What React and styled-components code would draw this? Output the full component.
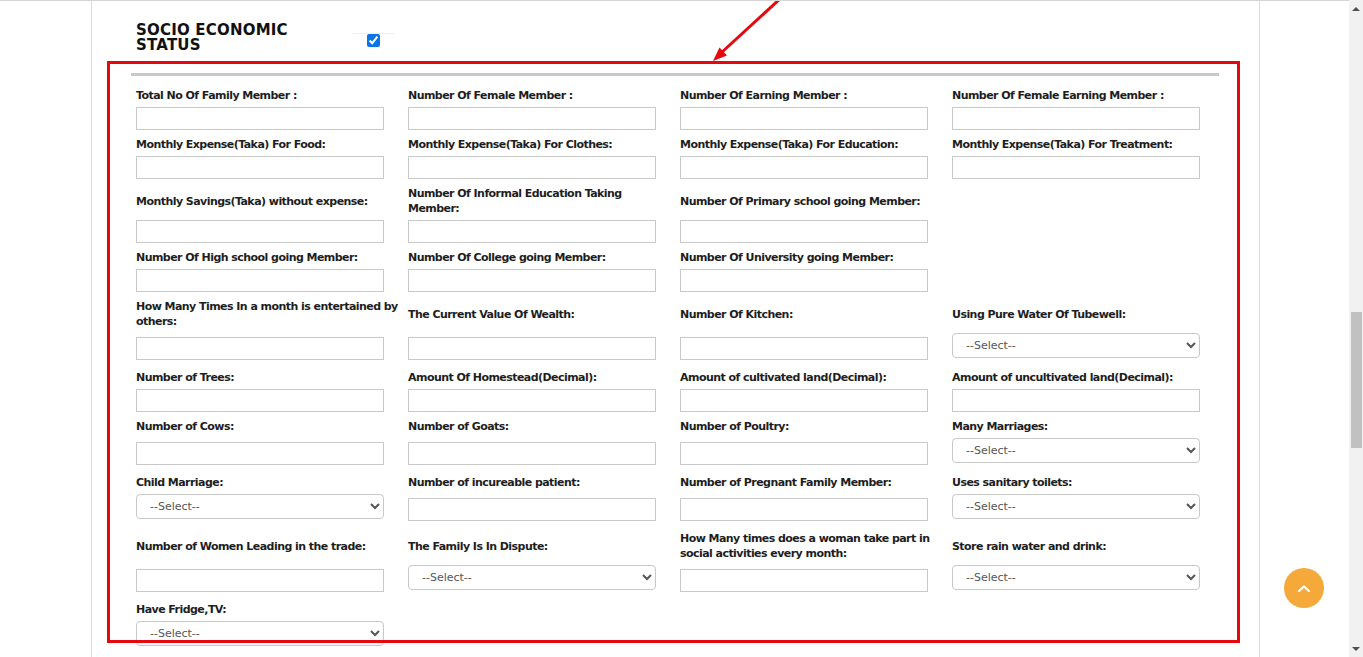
import React from "react";
import styled, { createGlobalStyle } from "styled-components";

const labelWidths = [266, 224, 252, 252];

const rows = [
  [
    { label: "Total No Of Family Member :" },
    { label: "Number Of Female Member :" },
    { label: "Number Of Earning Member :" },
    { label: "Number Of Female Earning Member :" },
  ],
  [
    { label: "Monthly Expense(Taka) For Food:" },
    { label: "Monthly Expense(Taka) For Clothes:" },
    { label: "Monthly Expense(Taka) For Education:" },
    { label: "Monthly Expense(Taka) For Treatment:" },
  ],
  [
    { label: "Monthly Savings(Taka) without expense:" },
    { label: "Number Of Informal Education Taking Member:" },
    { label: "Number Of Primary school going Member:" },
    null,
  ],
  [
    { label: "Number Of High school going Member:" },
    { label: "Number Of College going Member:" },
    { label: "Number Of University going Member:" },
    null,
  ],
  [
    { label: "How Many Times In a month is entertained by others:" },
    { label: "The Current Value Of Wealth:" },
    { label: "Number Of Kitchen:" },
    { label: "Using Pure Water Of Tubewell:", select: true },
  ],
  [
    { label: "Number of Trees:" },
    { label: "Amount Of Homestead(Decimal):" },
    { label: "Amount of cultivated land(Decimal):" },
    { label: "Amount of uncultivated land(Decimal):" },
  ],
  [
    { label: "Number of Cows:" },
    { label: "Number of Goats:" },
    { label: "Number of Poultry:" },
    { label: "Many Marriages:", select: true },
  ],
  [
    { label: "Child Marriage:", select: true },
    { label: "Number of incureable patient:" },
    { label: "Number of Pregnant Family Member:" },
    { label: "Uses sanitary toilets:", select: true },
  ],
  [
    { label: "Number of Women Leading in the trade:" },
    { label: "The Family Is In Dispute:", select: true },
    { label: "How Many times does a woman take part in social activities every month:" },
    { label: "Store rain water and drink:", select: true },
  ],
  [{ label: "Have Fridge,TV:", select: true }, null, null, null],
];

function App() {
  return (
    <>
      <GlobalStyle />
      <Window>
        <Main>
          <Container>
            <HeaderRow>
              <Heading>SOCIO ECONOMIC STATUS</Heading>
              <CheckCell>
                <Check type="checkbox" defaultChecked />
              </CheckCell>
            </HeaderRow>

            <Panel>
              <Rule />
              {rows.map((row, i) => (
                <React.Fragment key={i}>
                  <LabelRow>
                    {row.map((cell, j) => (
                      <Label key={j} $width={labelWidths[j]}>
                        {cell ? cell.label : ""}
                      </Label>
                    ))}
                  </LabelRow>
                  <FieldRow>
                    {row.map((cell, j) => {
                      if (!cell) return <span key={j} />;
                      if (cell.select)
                        return (
                          <Select key={j} defaultValue="">
                            <option value="">--Select--</option>
                            <option value="yes">Yes</option>
                            <option value="no">No</option>
                          </Select>
                        );
                      return <Input key={j} type="text" />;
                    })}
                  </FieldRow>
                </React.Fragment>
              ))}
            </Panel>
          </Container>

          <Arrow width="1349" height="70" viewBox="0 0 1349 70">
            <line x1="782" y1="-3" x2="721" y2="53" stroke="#e5090f" strokeWidth="3" />
            <polygon points="713,61 727,55.5 719.5,47.5" fill="#e5090f" />
          </Arrow>

          <TopButton aria-label="Back to top">
            <svg width="14" height="9" viewBox="0 0 14 9">
              <polyline
                points="2,7 7,2.5 12,7"
                fill="none"
                stroke="#fff"
                strokeWidth="2.2"
                strokeLinecap="round"
                strokeLinejoin="round"
              />
            </svg>
          </TopButton>
        </Main>

        <Scrollbar>
          <ScrollArrow $up />
          <Track>
            <Thumb />
          </Track>
          <ScrollArrow />
        </Scrollbar>
      </Window>
    </>
  );
}

const GlobalStyle = createGlobalStyle`
  html, body {
    margin: 0;
    padding: 0;
    background: #fff;
    overflow: hidden;
  }
  body {
    font-family: "DejaVu Sans", Verdana, sans-serif;
    color: #222;
  }
`;

const Window = styled.div`
  display: flex;
  width: 1363px;
  height: 657px;
  overflow: hidden;
`;

const Main = styled.div`
  position: relative;
  flex: 1;
  border-top: 1px solid #d6d6d6;
  overflow: hidden;
`;

const Container = styled.div`
  width: 1169px;
  min-height: 700px;
  margin-left: 91px;
  box-sizing: border-box;
  border-left: 1px solid #dcdcdc;
  border-right: 1px solid #dcdcdc;
`;

const HeaderRow = styled.div`
  display: flex;
  align-items: flex-start;
  padding: 22px 0 0 44px;
  height: 38px;
`;

const Heading = styled.h3`
  width: 216px;
  margin: 0;
  font-size: 15px;
  line-height: 15px;
  font-weight: bold;
  letter-spacing: 0.2px;
  color: #111;
`;

const CheckCell = styled.div`
  display: flex;
  justify-content: center;
  width: 43px;
  margin-top: 10px;
  border-top: 1px solid #f0f0f0;
`;

const Check = styled.input`
  width: 13px;
  height: 13px;
  margin: 0;
  accent-color: #0b75e8;
`;

const Panel = styled.section`
  position: relative;
  width: 1133px;
  height: 582px;
  margin-left: 15px;
  box-sizing: border-box;
  padding: 12px 21px 0 24px;

  &::after {
    content: "";
    position: absolute;
    inset: 0;
    border: 3px solid #e5090f;
    pointer-events: none;
    z-index: 2;
  }
`;

const Rule = styled.div`
  height: 3px;
  background: #c8c8c8;
  margin-bottom: 5px;
`;

const Grid = styled.div`
  display: grid;
  grid-template-columns: repeat(4, 248px);
  column-gap: 24px;
  padding-left: 5px;
  align-items: center;
`;

const LabelRow = styled(Grid)`
  padding-top: 7px;
  padding-bottom: 4px;
`;

const Label = styled.div`
  width: ${({ $width }) => $width}px;
  font-size: 11px;
  line-height: 15px;
  font-weight: bold;
  letter-spacing: -0.55px;
  color: #1e1e1e;
`;

const FieldRow = styled(Grid)``;

const Input = styled.input`
  display: block;
  width: 248px;
  height: 23px;
  box-sizing: border-box;
  margin: 0;
  border: 1px solid #c9c9c9;
  border-radius: 0;
  background: #fff;
  font: 11px "DejaVu Sans", Verdana, sans-serif;
`;

const Select = styled.select`
  display: block;
  width: 248px;
  height: 25px;
  box-sizing: border-box;
  margin: 0 0 5px;
  padding: 0 0 0 9px;
  border: 1px solid #c9c9c9;
  border-radius: 4px;
  background: #fff;
  color: #555;
  font: 11px "DejaVu Sans", Verdana, sans-serif;
`;

const Arrow = styled.svg`
  position: absolute;
  left: 0;
  top: -1px;
  pointer-events: none;
`;

const TopButton = styled.button`
  position: absolute;
  left: 1284px;
  top: 567px;
  width: 40px;
  height: 40px;
  padding: 0;
  border: none;
  border-radius: 50%;
  background: #f5a93b;
  display: flex;
  align-items: center;
  justify-content: center;
  cursor: pointer;
`;

const Scrollbar = styled.div`
  display: flex;
  flex-direction: column;
  width: 14px;
  background: #f1f1f1;
`;

const ScrollArrow = styled.div`
  height: 17px;
  display: flex;
  align-items: center;
  justify-content: center;

  &::before {
    content: "";
    border-left: 4px solid transparent;
    border-right: 4px solid transparent;
    ${({ $up }) =>
      $up ? "border-bottom: 4px solid #505050;" : "border-top: 4px solid #505050;"}
  }
`;

const Track = styled.div`
  flex: 1;
  padding-top: 295px;
`;

const Thumb = styled.div`
  width: 11px;
  height: 136px;
  margin-left: 2px;
  background: #c1c1c1;
`;

export default App;
